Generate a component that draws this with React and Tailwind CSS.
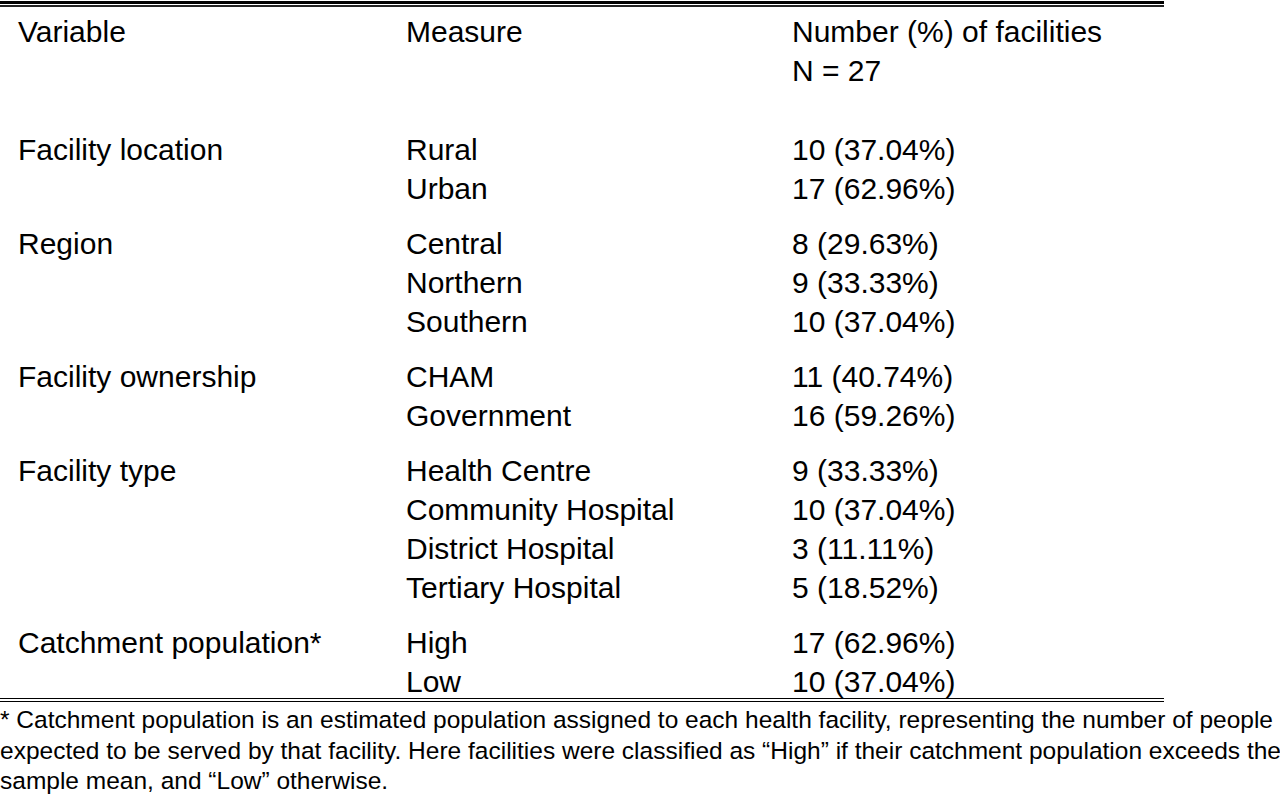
import React from "react";

const groups = [
  { label: "Facility location", rows: [["Rural", "10 (37.04%)"], ["Urban", "17 (62.96%)"]] },
  { label: "Region", rows: [["Central", "8 (29.63%)"], ["Northern", "9 (33.33%)"], ["Southern", "10 (37.04%)"]] },
  { label: "Facility ownership", rows: [["CHAM", "11 (40.74%)"], ["Government", "16 (59.26%)"]] },
  { label: "Facility type", rows: [["Health Centre", "9 (33.33%)"], ["Community Hospital", "10 (37.04%)"], ["District Hospital", "3 (11.11%)"], ["Tertiary Hospital", "5 (18.52%)"]] },
  { label: "Catchment population*", rows: [["High", "17 (62.96%)"], ["Low", "10 (37.04%)"]] },
];

function Group({ g, first, last }) {
  return (
    <div className={`grid grid-cols-[388px_386px_1fr] pl-[18px] ${first ? "" : "mt-[16px]"} ${last ? "h-[75px]" : ""}`}>
      {g.rows.map((r, i) => (
        <React.Fragment key={i}>
          <div className="whitespace-nowrap">{i === 0 ? g.label : ""}</div>
          <div className="whitespace-nowrap">{r[0]}</div>
          <div className="whitespace-nowrap">{r[1]}</div>
        </React.Fragment>
      ))}
    </div>
  );
}

export default function App() {
  return (
    <div className="w-[1280px] h-[798px] bg-white overflow-hidden text-black font-['Liberation_Sans',Arial,sans-serif]">
      <div className="w-[1164px] text-[30px] leading-[39px]">
        <div className="pt-[1px]">
          <div className="h-[3px] bg-black" />
          <div className="h-[1px]" />
          <div className="h-[2px] bg-[#222]" />
        </div>
        <div className="grid grid-cols-[388px_386px_1fr] pl-[18px] pt-[5px]">
          <div>Variable</div>
          <div>Measure</div>
          <div className="whitespace-nowrap">
            <div>Number (%) of facilities</div>
            <div>N = 27</div>
          </div>
        </div>
        <div className="h-[40px]" />
        {groups.map((g, i) => (
          <Group key={i} g={g} first={i === 0} last={i === groups.length - 1} />
        ))}
        <div className="h-[1px] bg-black" />
        <div className="h-[2px]" />
        <div className="h-[1px] bg-black" />
      </div>
      <div className="pt-[3px] text-[24.5px] leading-[30.5px] whitespace-nowrap">
        <div>* Catchment population is an estimated population assigned to each health facility, representing the number of people</div>
        <div>expected to be served by that facility. Here facilities were classified as “High” if their catchment population exceeds the</div>
        <div>sample mean, and “Low” otherwise.</div>
      </div>
    </div>
  );
}
